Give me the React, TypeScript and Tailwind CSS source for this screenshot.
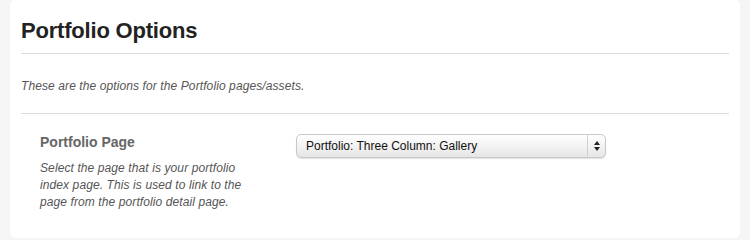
import React from "react";

export default function App() {
  return (
    <div
      className="w-[750px] h-[240px] bg-[#f5f5f5] pl-[10px] pr-[10px] overflow-hidden"
      style={{ fontFamily: '"Liberation Sans", Arial, sans-serif' }}
    >
      <div className="w-[730px] h-[238px] bg-white rounded-[5px] px-[11px] pt-[17px]">
        <h1 className="text-[22px] leading-[28px] font-bold text-[#222] tracking-[-0.2px]">Portfolio Options</h1>
        <div className="mt-[8px] border-t border-[#dcdcdc]" />
        <p className="mt-[24px] text-[12px] leading-[16px] italic text-[#555] tracking-[0.1px]">
          These are the options for the Portfolio pages/assets.
        </p>
        <div className="mt-[19px] border-t border-[#dcdcdc]" />
        <div className="flex pl-[19px] pt-[19px]">
          <div className="w-[256px]">
            <div className="text-[14px] leading-[18px] font-bold text-[#666]">Portfolio Page</div>
            <p className="mt-[9px] text-[12px] leading-[17px] italic text-[#555] w-[205px] tracking-[0.1px]">
              Select the page that is your portfolio index page. This is used to link to the page from the portfolio detail page.
            </p>
          </div>
          <div className="mt-[1px] w-[310px] h-[24px] rounded-[5px] border border-[#c8c8c8] bg-gradient-to-b from-white to-[#e6e6e6] shadow-[0_1px_1px_rgba(0,0,0,0.12)] flex items-center">
            <span className="flex-1 pl-[9px] text-[12px] text-[#111]">Portfolio: Three Column: Gallery</span>
            <div className="w-[18px] h-full border-l border-[#d0d0d0] flex items-center justify-center">
              <svg width="6" height="10" viewBox="0 0 6 10">
                <path d="M3 0 L6 4 L0 4 Z" fill="#222" />
                <path d="M0 6 L6 6 L3 10 Z" fill="#222" />
              </svg>
            </div>
          </div>
        </div>
      </div>
    </div>
  );
}
